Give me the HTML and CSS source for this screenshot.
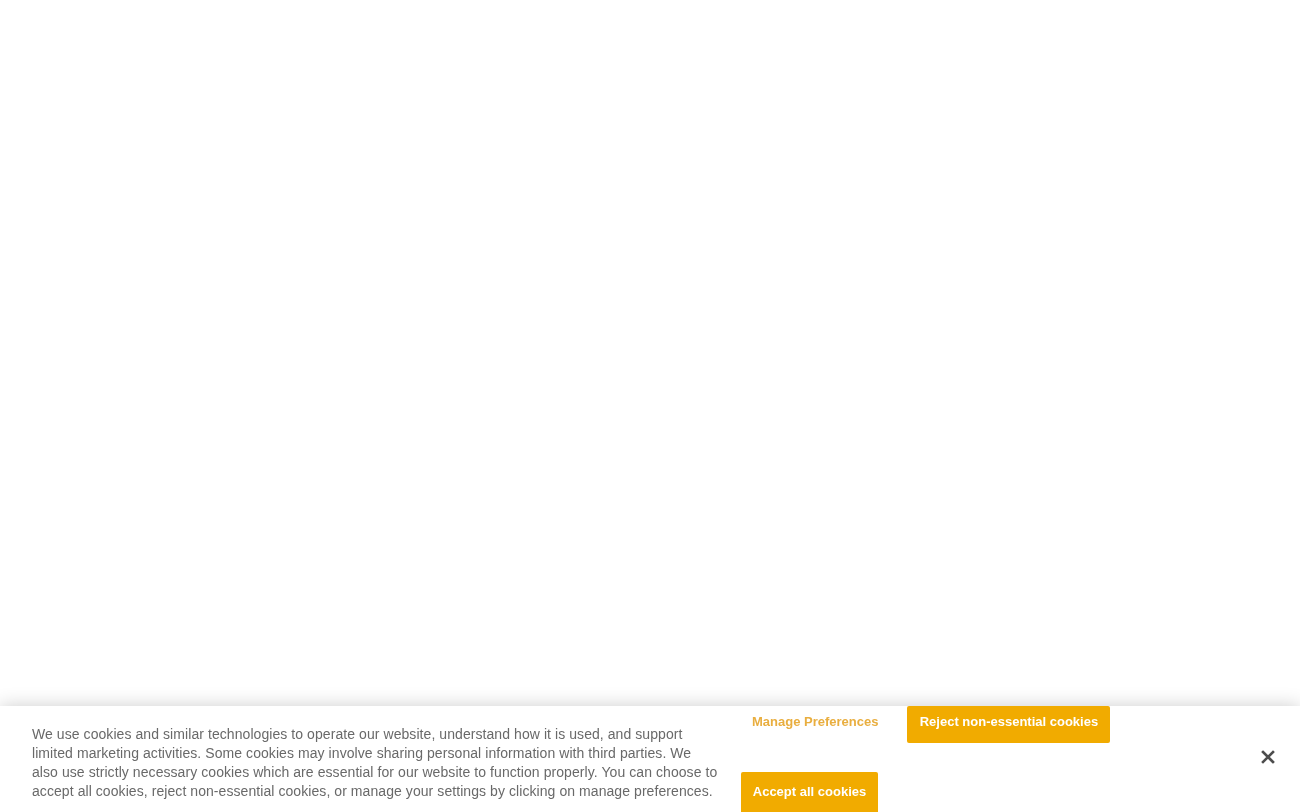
FILE: index.html
```html
<!DOCTYPE html>
<html lang="en">
<head>
<meta charset="utf-8">
<title>Cookies</title>
<link rel="stylesheet" href="styles.css">
</head>
<body>
<div class="page"></div>
<div class="banner">
  <div class="banner-inner">
    <p class="policy">We use cookies and similar technologies to operate our website, understand how it is used, and support limited marketing activities. Some cookies may involve sharing personal information with third parties. We also use strictly necessary cookies which are essential for our website to function properly. You can choose to accept all cookies, reject non-essential cookies, or manage your settings by clicking on manage preferences.</p>
    <div class="actions">
      <div class="row">
        <button class="link-btn">Manage Preferences</button>
        <button class="btn reject">Reject non-essential cookies</button>
      </div>
      <div class="row">
        <button class="btn accept">Accept all cookies</button>
      </div>
    </div>
    <button class="close" aria-label="Close">
      <svg width="14" height="14" viewBox="0 0 14 14"><path d="M2 2 L12 12 M12 2 L2 12" stroke="#4d4d4d" stroke-width="2.6" stroke-linecap="square"/></svg>
    </button>
  </div>
</div>
</body>
</html>
```

FILE: styles.css
```css
html, body {
  margin: 0;
  padding: 0;
  background: #ffffff;
  overflow: hidden;
}
.page {
  height: 812px;
}
.banner {
  position: fixed;
  left: 0;
  right: 0;
  top: 706px;
  background: #ffffff;
  box-shadow: 0 0 18px rgba(0, 0, 0, 0.2);
  font-family: "Liberation Sans", Arial, sans-serif;
}
.banner-inner {
  display: flex;
  align-items: flex-start;
  padding: 0 0 30px 32px;
}
.policy {
  width: 686px;
  margin: 19px 0 0 0;
  font-size: 14px;
  line-height: 19px;
  color: #696969;
  letter-spacing: 0.07px;
}
.actions {
  margin-left: 23px;
  display: flex;
  flex-direction: column;
  gap: 29px;
}
.row {
  display: flex;
  gap: 18px;
}
button {
  font-family: "Liberation Sans", Arial, sans-serif;
  cursor: pointer;
  line-height: 15px;
}
.link-btn {
  background: none;
  border: none;
  height: 37px;
  padding: 8px 11px 14px;
  font-size: 13px;
  font-weight: bold;
  color: #e9ae3f;
}
.btn {
  background: #f1ab00;
  border: none;
  border-radius: 2px;
  color: #ffffff;
  font-size: 13px;
  font-weight: bold;
  padding: 8px 11px 14px;
  height: 37px;
}
.reject {
  width: 203px;
}
.accept {
  width: 137px;
  height: 44px;
  padding: 12px 11px 17px;
}
.close {
  margin-left: 151px;
  margin-top: 44px;
  background: none;
  border: none;
  padding: 0;
  width: 14px;
  height: 14px;
  display: flex;
}
```
